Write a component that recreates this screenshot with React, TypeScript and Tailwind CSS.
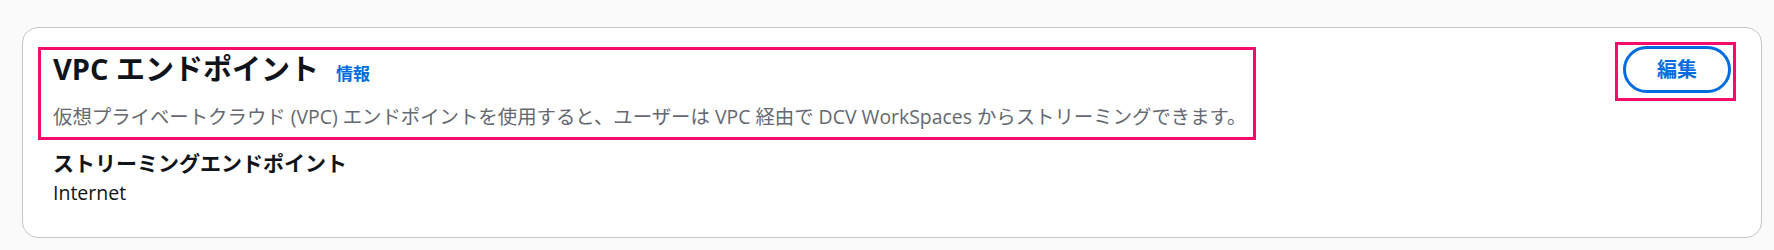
const FONT = { fontFamily: '"Open Sans", "Noto Sans CJK JP", sans-serif' };

export default function App() {
  return (
    <div
      style={FONT}
      className="w-[1774px] h-[250px] bg-[#fafafa] pl-[22px] pr-[12px] pt-[27px]"
    >
      <div className="h-[211px] rounded-[16px] border border-[#c6c6cd] bg-white px-[30px] pt-[14px]">
        <div className="flex items-start justify-between">
          <div className="-ml-[15px] mt-[5px] w-[1218px] border-[3px] border-[#f80c6b] pl-[12px] pt-[2px] pb-[6px]">
            <div className="flex items-baseline gap-[17px] leading-[34px]">
              <h2 className="text-[29px] font-bold text-[#0f141a]">VPC エンドポイント</h2>
              <a className="text-[17px] font-bold text-[#006ce0]">情報</a>
            </div>
            <p className="mt-[12px] whitespace-nowrap text-[19.4px] leading-[28px] text-[#656871]">
              仮想プライベートクラウド (VPC) エンドポイントを使用すると、ユーザーは VPC 経由で DCV WorkSpaces からストリーミングできます。
            </p>
          </div>
          <div className="-mr-[5px] border-[3px] border-[#f80c6b] pl-[5px] pr-[2px] pt-[1px] pb-[5px]">
            <button className="flex h-[47px] w-[108px] items-center justify-center rounded-full border-[3px] border-[#006ce0] text-[20px] font-bold text-[#006ce0]">
              編集
            </button>
          </div>
        </div>
        <div className="mt-[9px]">
          <div className="text-[21px] font-bold leading-[28px] text-[#0f141a]">
            ストリーミングエンドポイント
          </div>
          <div className="mt-[2px] text-[19.5px] leading-[28px] text-[#0f141a]">Internet</div>
        </div>
      </div>
    </div>
  );
}
